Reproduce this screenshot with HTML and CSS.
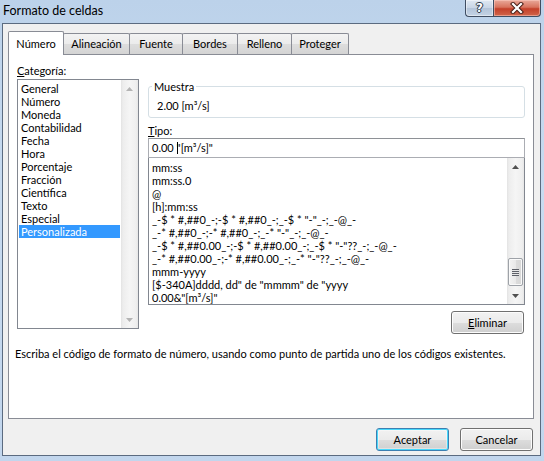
FILE: index.html
```html
<!DOCTYPE html>
<html lang="es">
<head>
<meta charset="utf-8">
<title>Formato de celdas</title>
<link rel="stylesheet" href="styles.css">
</head>
<body>
<div class="window">
  <div class="titlebar">
    <span class="title">Formato de celdas</span>
    <div class="caption-buttons">
      <div class="cap-btn help"><span class="help-glyph">?</span></div>
      <div class="cap-btn close">
        <svg width="14" height="12" viewBox="0 0 14 12" aria-hidden="true">
          <path d="M3 2 L11 10 M11 2 L3 10" stroke="#4a2019" stroke-width="4.2" stroke-linecap="square" fill="none"/>
          <path d="M3 2 L11 10 M11 2 L3 10" stroke="#ffffff" stroke-width="2.2" stroke-linecap="square" fill="none"/>
        </svg>
      </div>
    </div>
  </div>
  <div class="dialog">
    <div class="tabs">
      <div class="tab active tab-numero">Número</div>
      <div class="tab tab-alineacion">Alineación</div>
      <div class="tab tab-fuente">Fuente</div>
      <div class="tab tab-bordes">Bordes</div>
      <div class="tab tab-relleno">Relleno</div>
      <div class="tab tab-proteger">Proteger</div>
    </div>
    <div class="panel">
      <div class="columns">
        <div class="cat-col">
          <div class="label"><u>C</u>ategoría:</div>
          <div class="listbox cat-list">
            <ul class="items">
              <li>General</li>
              <li>Número</li>
              <li>Moneda</li>
              <li>Contabilidad</li>
              <li>Fecha</li>
              <li>Hora</li>
              <li>Porcentaje</li>
              <li>Fracción</li>
              <li>Científica</li>
              <li>Texto</li>
              <li>Especial</li>
              <li class="selected">Personalizada</li>
            </ul>
            <div class="vscroll disabled">
              <div class="arrow"><svg width="7" height="4" viewBox="0 0 7 4"><path d="M0 4 L3.5 0 L7 4 Z"/></svg></div>
              <div class="track"></div>
              <div class="arrow"><svg width="7" height="4" viewBox="0 0 7 4"><path d="M0 0 L3.5 4 L7 0 Z"/></svg></div>
            </div>
          </div>
        </div>
        <div class="fmt-col">
          <fieldset class="sample">
            <legend>Muestra</legend>
            <div class="sample-value">2.00 [m³/s]</div>
          </fieldset>
          <div class="label tipo-label"><u>T</u>ipo:</div>
          <div class="textbox">0.00 <span class="caret"></span>"[m³/s]"</div>
          <div class="listbox fmt-list">
            <ul class="items">
              <li>mm:ss</li>
              <li>mm:ss.0</li>
              <li>@</li>
              <li>[h]:mm:ss</li>
              <li>_-$ * #,##0_-;-$ * #,##0_-;_-$ * "-"_-;_-@_-</li>
              <li>_-* #,##0_-;-* #,##0_-;_-* "-"_-;_-@_-</li>
              <li>_-$ * #,##0.00_-;-$ * #,##0.00_-;_-$ * "-"??_-;_-@_-</li>
              <li>_-* #,##0.00_-;-* #,##0.00_-;_-* "-"??_-;_-@_-</li>
              <li>mmm-yyyy</li>
              <li>[$-340A]dddd, dd" de "mmmm" de "yyyy</li>
              <li>0.00&amp;"[m³/s]"</li>
            </ul>
            <div class="vscroll">
              <div class="arrow"><svg width="7" height="4" viewBox="0 0 7 4"><path d="M0 4 L3.5 0 L7 4 Z"/></svg></div>
              <div class="track">
                <div class="thumb"><span class="grip"></span></div>
              </div>
              <div class="arrow"><svg width="7" height="4" viewBox="0 0 7 4"><path d="M0 0 L3.5 4 L7 0 Z"/></svg></div>
            </div>
          </div>
          <div class="action-row">
            <button class="btn"><u>E</u>liminar</button>
          </div>
        </div>
      </div>
      <p class="desc">Escriba el código de formato de número, usando como punto de partida uno de los códigos existentes.</p>
    </div>
    <div class="footer">
      <button class="btn default">Aceptar</button>
      <button class="btn">Cancelar</button>
    </div>
  </div>
</div>
</body>
</html>
```

FILE: styles.css
```css
* {
  box-sizing: border-box;
  margin: 0;
  padding: 0;
}

html, body {
  width: 544px;
  height: 461px;
  overflow: hidden;
}

body {
  font-family: Lato, "Noto Sans", "DejaVu Sans", sans-serif;
  font-size: 11px;
  color: #000;
  background: #c3d7ee;
}

.window {
  width: 544px;
  height: 461px;
  display: flex;
  flex-direction: column;
  padding: 0 3px 5px 2px;
  background: linear-gradient(to bottom, #bcd2ea 0%, #c8dbf0 40%, #c2d6ed 100%);
}

/* ---------- title bar ---------- */
.titlebar {
  height: 23px;
  display: flex;
  align-items: flex-start;
  flex: none;
}

.title {
  padding-left: 1px;
  font-size: 12.5px;
  line-height: 21px;
  color: #000;
}

.caption-buttons {
  margin-left: auto;
  display: flex;
}

.cap-btn {
  height: 17px;
  border: 1px solid #3f4d62;
  border-top: 0;
  display: flex;
  align-items: center;
  justify-content: center;
}

.help {
  width: 28px;
  border-right: 0;
  border-bottom-left-radius: 4px;
  background: linear-gradient(to bottom, #dfe8f3 0%, #c9d6e6 48%, #b3c4d9 52%, #c4d3e5 100%);
  box-shadow: inset 0 0 0 1px rgba(255,255,255,0.45);
}

.help-glyph {
  font-family: "DejaVu Sans", sans-serif;
  font-weight: bold;
  font-size: 12px;
  line-height: 14px;
  color: #fff;
  text-shadow: 0 0 1px #2d3a4d, 1px 0 0 #2d3a4d, -1px 0 0 #2d3a4d, 0 1px 0 #2d3a4d, 0 -1px 0 #2d3a4d;
}

.close {
  width: 48px;
  border-bottom-right-radius: 4px;
  background: linear-gradient(to bottom, #e9a99b 0%, #d8735e 45%, #c4402a 55%, #d0654a 100%);
  box-shadow: inset 0 0 0 1px rgba(255,210,200,0.5);
}

/* ---------- dialog body ---------- */
.dialog {
  flex: 1;
  display: flex;
  flex-direction: column;
  background: #f0f0f0;
  border: 1px solid #5b6b80;
  padding: 0 6px 0 5px;
}

.tabs {
  height: 30px;
  padding-top: 7px;
  display: flex;
  align-items: flex-end;
  flex: none;
}

.tab {
  height: 21px;
  margin-right: -1px;
  border: 1px solid #898c95;
  border-bottom: 0;
  border-radius: 2px 2px 0 0;
  line-height: 19px;
  text-align: center;
  background: linear-gradient(to bottom, #f3f3f3 0%, #ebebeb 50%, #dddddd 51%, #d4d4d4 100%);
  white-space: nowrap;
}

.tab-numero { width: 56px; }
.tab-alineacion { width: 67px; }
.tab-fuente { width: 54px; }
.tab-bordes { width: 56px; }
.tab-relleno { width: 55px; }
.tab-proteger { width: 58px; }

.tab.active {
  position: relative;
  z-index: 1;
  height: 24px;
  margin-bottom: -1px;
  line-height: 23px;
  background: #fff;
}

.panel {
  height: 365px;
  flex: none;
  background: #fff;
  border: 1px solid #898c95;
  padding: 9px 8px 0 8px;
}

.columns {
  display: flex;
  gap: 9px;
}

.label {
  line-height: 13px;
  white-space: nowrap;
}

.cat-col {
  width: 122px;
  flex: none;
}

.fmt-col {
  width: 377px;
  flex: none;
  display: flex;
  flex-direction: column;
}

/* ---------- list boxes ---------- */
.listbox {
  display: flex;
  border: 1px solid #828790;
  background: #fff;
}

.items {
  list-style: none;
  flex: 1;
  min-width: 0;
  overflow: hidden;
}

.items li {
  line-height: 13px;
  height: 13px;
  white-space: nowrap;
}

.cat-list {
  margin-top: 2px;
  height: 250px;
}

.cat-list .items {
  padding: 2px 1px 0 1px;
}

.cat-list .items li {
  padding-left: 2px;
}

.cat-list .items li.selected {
  background: #3399ff;
  color: #fff;
}

.fmt-list {
  margin-top: -1px;
  height: 148px;
}

.fmt-list .items {
  padding: 3px 0 0 3px;
}

/* ---------- scroll bars ---------- */
.vscroll {
  width: 17px;
  flex: none;
  display: flex;
  flex-direction: column;
  background: linear-gradient(to right, #e3e3e3 0px, #ededed 2px, #f5f5f5 50%, #efefef calc(100% - 2px), #e6e6e6 100%);
}

.arrow {
  height: 17px;
  flex: none;
  display: flex;
  align-items: center;
  justify-content: center;
}

.arrow svg {
  fill: #505050;
}

.vscroll.disabled .arrow svg {
  fill: #b4b4b4;
}

.track {
  flex: 1;
  display: flex;
  flex-direction: column;
  justify-content: flex-end;
}

.thumb {
  height: 28px;
  margin: 0 1px 1px;
  border: 1px solid #9ea2a8;
  border-radius: 2px;
  background: linear-gradient(to right, #f3f3f3 0%, #e9e9e9 50%, #dcdcdc 51%, #d7d7d7 100%);
  box-shadow: inset 0 0 0 1px #fafafa;
  display: flex;
  align-items: center;
  justify-content: center;
}

.grip {
  width: 7px;
  height: 7px;
  background: repeating-linear-gradient(to bottom, #5d6068 0px, #5d6068 1px, #e6e6e6 1px, #e6e6e6 2px);
}

/* ---------- sample group ---------- */
.sample {
  margin-top: 16px;
  height: 38px;
  border: 1px solid #d5dfe5;
  border-radius: 3px;
  padding: 0;
  min-width: 0;
}

.sample legend {
  margin-left: 3px;
  padding: 0 2px;
  line-height: 13px;
}

.sample-value {
  padding: 6px 0 0 8px;
  line-height: 13px;
  white-space: nowrap;
}

.tipo-label {
  margin-top: 6px;
}

.textbox {
  margin-top: 1px;
  height: 20px;
  border: 1px solid #abadb3;
  border-top-color: #8e9196;
  padding-left: 3px;
  line-height: 18px;
  white-space: nowrap;
  background: #fff;
  position: relative;
  z-index: 1;
}

.caret {
  display: inline-block;
  width: 1px;
  height: 12px;
  margin-right: -1px;
  background: #000;
  vertical-align: -2px;
}

/* ---------- buttons ---------- */
.btn {
  width: 73px;
  height: 23px;
  font: inherit;
  color: #000;
  border: 1px solid #707070;
  border-radius: 3px;
  background: linear-gradient(to bottom, #f2f2f2 0%, #ebebeb 50%, #dddddd 51%, #cfcfcf 100%);
  box-shadow: inset 0 0 0 1px #fcfcfc;
  line-height: 20px;
}

.btn.default {
  border-color: #3c7fb1;
  box-shadow: inset 0 0 0 1px #48d8fb, inset 0 0 0 2px rgba(255,255,255,0.35);
}

.action-row {
  display: flex;
  justify-content: flex-end;
  margin-top: 6px;
  padding-right: 1px;
}

.desc {
  margin-top: 13px;
  margin-left: -2px;
  line-height: 13px;
  white-space: nowrap;
}

.footer {
  display: flex;
  justify-content: flex-end;
  gap: 11px;
  padding-top: 9px;
  padding-right: 1px;
}
```
